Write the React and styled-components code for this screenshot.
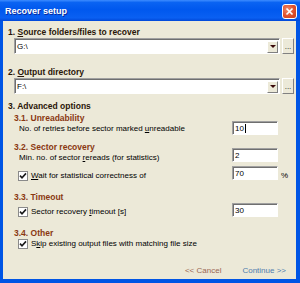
import React from "react";
import styled, { createGlobalStyle } from "styled-components";

const GlobalStyle = createGlobalStyle`
  html, body {
    margin: 0;
    padding: 0;
  }
  body {
    font-family: "Liberation Sans", Arial, sans-serif;
    background: #ffffff;
  }
  * {
    box-sizing: border-box;
  }
`;

const Window = styled.div`
  width: 300px;
  height: 283px;
  display: flex;
  flex-direction: column;
  background: #0055e5;
  overflow: hidden;
`;

const TitleBar = styled.div`
  height: 21px;
  flex: none;
  display: flex;
  align-items: center;
  justify-content: space-between;
  padding: 0 3px 0 5px;
  background: linear-gradient(
    #3d8cff 0%,
    #0a63f2 12%,
    #0058ee 45%,
    #0a60f2 85%,
    #0047d8 100%
  );
`;

const Title = styled.span`
  color: #ffffff;
  font-weight: bold;
  font-size: 9px;
  text-shadow: 1px 1px 0 #0b2a9a;
`;

const CloseBtn = styled.div`
  width: 15px;
  height: 15px;
  margin-top: 1px;
  border: 1px solid #ffffff;
  border-radius: 3px;
  background: radial-gradient(circle at 35% 35%, #f08a6a 0%, #e0502c 55%, #c8401c 100%);
  display: flex;
  align-items: center;
  justify-content: center;
`;

const Body = styled.div`
  flex: 1;
  margin: 0 4px 4px 3px;
  padding: 6px 2px 0 5px;
  background: #ece9d8;
  display: flex;
  flex-direction: column;
  font-size: 8px;
  color: #000000;
`;

const Heading = styled.div`
  font-weight: bold;
  font-size: 8.5px;
  line-height: 10px;
  white-space: nowrap;
  color: ${(p) => (p.$sub ? "#8a3812" : "#2a1608")};
  margin-left: ${(p) => (p.$sub ? 6 : 0)}px;
  margin-top: ${(p) => p.$mt || 0}px;
`;

const Key = styled.span`
  text-decoration: underline;
`;

const ComboRow = styled.div`
  display: flex;
  gap: 2px;
  height: 16px;
  margin-left: 6px;
  margin-top: ${(p) => p.$mt || 0}px;
`;

const sunken = `
  background: #ffffff;
  border-top: 1px solid #a0a0a0;
  border-left: 1px solid #a0a0a0;
  border-right: 1px solid #ffffff;
  border-bottom: 1px solid #ffffff;
  box-shadow: inset 1px 1px 0 #6f6f6f;
`;

const Combo = styled.div`
  flex: 1;
  ${sunken}
  display: flex;
  align-items: center;
  padding: 1px 1px 0 2px;
`;

const ComboText = styled.span`
  flex: 1;
  font-size: 8px;
`;

const DropBtn = styled.div`
  width: 11px;
  height: 12px;
  background: #ece9d8;
  border-top: 1px solid #ffffff;
  border-left: 1px solid #ffffff;
  border-right: 1px solid #808080;
  border-bottom: 1px solid #808080;
  display: flex;
  align-items: center;
  justify-content: center;
`;

const Arrow = styled.span`
  width: 0;
  height: 0;
  border-left: 3px solid transparent;
  border-right: 3px solid transparent;
  border-top: 3px solid #3a0a0a;
`;

const DotsBtn = styled.div`
  width: 12px;
  background: #ece9d8;
  border-top: 1px solid #ffffff;
  border-left: 1px solid #ffffff;
  border-right: 1px solid #808080;
  border-bottom: 1px solid #808080;
  display: flex;
  align-items: flex-end;
  justify-content: center;
  font-size: 8px;
  line-height: 9px;
  padding-bottom: 2px;
  color: #202020;
`;

const Row = styled.div`
  display: flex;
  align-items: flex-start;
  height: ${(p) => p.$h || 14}px;
  margin-top: ${(p) => p.$mt || 0}px;
`;

const Label = styled.div`
  flex: 1;
  display: flex;
  align-items: center;
  gap: 3px;
  line-height: 11px;
  white-space: nowrap;
  padding-top: ${(p) => p.$top || 0}px;
  padding-left: ${(p) => (p.$check ? 10 : 11)}px;
`;

const Check = styled.span`
  width: 10px;
  height: 10px;
  flex: none;
  background: #ffffff;
  border: 1px solid #8a8a8a;
  display: flex;
  align-items: center;
  justify-content: center;
`;

const Field = styled.div`
  width: 46px;
  height: 14px;
  flex: none;
  ${sunken}
  display: flex;
  align-items: center;
  padding: 1px 0 0 2px;
  font-size: 8px;
`;

const Caret = styled.span`
  width: 1px;
  height: 9px;
  background: #000000;
  margin-left: 1px;
`;

const Unit = styled.span`
  width: 16px;
  flex: none;
  padding-left: 3px;
  line-height: 11px;
  padding-top: ${(p) => p.$top || 0}px;
`;

const Footer = styled.div`
  display: flex;
  justify-content: flex-end;
  gap: 21px;
  padding-right: 8px;
  margin-top: ${(p) => p.$mt || 0}px;
  line-height: 11px;
  font-size: 8px;
`;

const LinkBtn = styled.span`
  color: ${(p) => (p.$primary ? "#4f7cae" : "#9a6652")};
`;

function Tick() {
  return (
    <svg width="8" height="8" viewBox="0 0 8 8">
      <path d="M1 3.6 L3 5.8 L7 1.4" fill="none" stroke="#1a1a1a" strokeWidth="1.6" />
    </svg>
  );
}

function XMark() {
  return (
    <svg width="9" height="9" viewBox="0 0 9 9">
      <path d="M1.5 1.5 L7.5 7.5 M7.5 1.5 L1.5 7.5" stroke="#ffffff" strokeWidth="1.7" />
    </svg>
  );
}

function PathCombo({ value, mt }) {
  return (
    <ComboRow $mt={mt}>
      <Combo>
        <ComboText>{value}</ComboText>
        <DropBtn>
          <Arrow />
        </DropBtn>
      </Combo>
      <DotsBtn>...</DotsBtn>
    </ComboRow>
  );
}

export default function App() {
  return (
    <>
      <GlobalStyle />
      <Window>
        <TitleBar>
          <Title>Recover setup</Title>
          <CloseBtn>
            <XMark />
          </CloseBtn>
        </TitleBar>
        <Body>
          <Heading>
            1. <Key>S</Key>ource folders/files to recover
          </Heading>
          <PathCombo value="G:\" mt={1} />

          <Heading $mt={13}>
            2. <Key>O</Key>utput directory
          </Heading>
          <PathCombo value="F:\" mt={1} />

          <Heading $mt={7}>3. Advanced options</Heading>

          <Heading $sub $mt={2}>3.1. Unreadability</Heading>
          <Row $mt={-2}>
            <Label $top={2}>
              <span>
                No. of retries before sector marked <Key>u</Key>nreadable
              </span>
            </Label>
            <Field>
              10
              <Caret />
            </Field>
            <Unit />
          </Row>

          <Heading $sub $mt={7}>3.2. Sector recovery</Heading>
          <Row $mt={-4}>
            <Label $top={4}>
              <span>
                Min. no. of sector <Key>r</Key>ereads (for statistics)
              </span>
            </Label>
            <Field>2</Field>
            <Unit />
          </Row>
          <Row $mt={4}>
            <Label $check $top={4}>
              <Check>
                <Tick />
              </Check>
              <span>
                <Key>W</Key>ait for statistical correctness of
              </span>
            </Label>
            <Field>70</Field>
            <Unit $top={4}>%</Unit>
          </Row>

          <Heading $sub $mt={12}>3.3. Timeout</Heading>
          <Row $mt={1}>
            <Label $check $top={3}>
              <Check>
                <Tick />
              </Check>
              <span>
                Sector recovery <Key>t</Key>imeout [s]
              </span>
            </Label>
            <Field>30</Field>
            <Unit />
          </Row>

          <Heading $sub $mt={11}>3.4. Other</Heading>
          <Row $h={11}>
            <Label $check>
              <Check>
                <Tick />
              </Check>
              <span>
                S<Key>k</Key>ip existing output files with matching file size
              </span>
            </Label>
          </Row>

          <Footer $mt={16}>
            <LinkBtn>&lt;&lt; Cancel</LinkBtn>
            <LinkBtn $primary>Continue &gt;&gt;</LinkBtn>
          </Footer>
        </Body>
      </Window>
    </>
  );
}
